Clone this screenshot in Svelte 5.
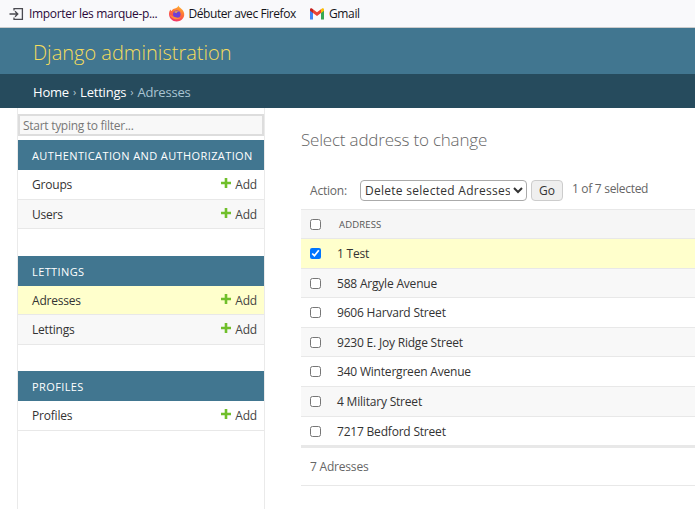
<script>
  const models = [
    { caption: 'Authentication and Authorization', rows: ['Groups', 'Users'] },
    { caption: 'Lettings', rows: ['Adresses', 'Lettings'], current: 'Adresses' },
    { caption: 'Profiles', rows: ['Profiles'] }
  ]
  const addresses = [
    '1 Test',
    '588 Argyle Avenue',
    '9606 Harvard Street',
    '9230 E. Joy Ridge Street',
    '340 Wintergreen Avenue',
    '4 Military Street',
    '7217 Bedford Street'
  ]
</script>

<div class="bookmarks">
  <div class="bm">
    <svg width="16" height="16" viewBox="0 0 16 16" fill="none" stroke="#4a4a50" stroke-width="1.3">
      <path d="M5 4.5V2.600h8.400v10.800H5v-1.900" />
      <path d="M0.500 8h8M6 5.200 8.800 8 6 10.800" />
    </svg>
    <span class="import">Importer les marque-p...</span>
  </div>
  <div class="bm fx">
    <svg width="17" height="17" viewBox="0 0 17 17">
      <defs>
        <linearGradient id="fxg" x1="0.700" y1="0" x2="0.300" y2="1">
          <stop offset="0" stop-color="#ffb52e" />
          <stop offset="0.500" stop-color="#ff6a3a" />
          <stop offset="1" stop-color="#f0306f" />
        </linearGradient>
      </defs>
      <path d="M10.500.500c.2 1.500 1.500 2 2.500 3 2.500 2 3.500 4.500 3.200 6.800-.5 3.700-3.700 6.200-7.500 6.200C4.500 16.500 1 13.200 1 9c0-1.800.6-3.500 1.400-4.600.2.800.6 1.300 1.200 1.600C4.300 4.700 5.500 4 7 3.600 8.500 3 10 2 10.500.500z" fill="url(#fxg)" />
      <circle cx="8.800" cy="9.300" r="3.700" fill="#6e3fd8" />
      <path d="M5.600 7.300C7 5.800 10 5.700 11.600 7.300c-1.600-.5-3-.2-3.400 1-.5-.7-1.500-1-2.600-1z" fill="#ffb52e" />
      <path d="M2 9.500c.6 2.800 3.500 5 6.700 4.800 2.200-.1 4-1.200 5-2.800-1.200 1-3 1.600-5 1.100C6.300 12 4 11 2 9.500z" fill="#ff8a3a" />
    </svg>
    <span class="fx-label">Débuter avec Firefox</span>
  </div>
  <div class="bm gm">
    <svg width="16" height="16" viewBox="0 0 16 16">
      <path d="M1 13.500V4l3 2.300v7.200z" fill="#4285f4" />
      <path d="M12 13.500V6.300L15 4v9.500z" fill="#34a853" />
      <path d="M12 3.200V7l3-2.300V3.500c0-1-1.200-1.600-2-1z" fill="#fbbc04" />
      <path d="M4 7V3.200L8 6.200l4-3V7L8 10z" fill="#ea4335" />
      <path d="M1 3.500v1.200L4 7V3.200l-1-.7c-.8-.6-2 0-2 1z" fill="#c5221f" />
    </svg>
    <span>Gmail</span>
  </div>
</div>

<header class="site-header">Django administration</header>

<nav class="crumbs">
  <span>Home</span><i>›</i><span>Lettings</span><i>›</i><span class="here">Adresses</span>
</nav>

<div class="page">
  <aside class="sidebar">
    <input class="filter" type="text" placeholder="Start typing to filter..." />
    {#each models as group}
      <section class="module">
        <h2>{group.caption}</h2>
        {#each group.rows as row, i}
          <div class="mrow" class:alt={i % 2 === 1} class:current={row === group.current}>
            <span>{row}</span>
            <span class="add">
              <svg width="10" height="10" viewBox="0 0 10 10"><path d="M3.700 0h2.600v3.700H10v2.600H6.300V10H3.700V6.300H0V3.700h3.700z" fill="#70bf2b" /></svg>
              Add
            </span>
          </div>
        {/each}
      </section>
    {/each}
  </aside>

  <main class="content">
    <h1>Select address to change</h1>
    <div class="actions">
      <span class="lbl">Action:</span>
      <select class="act-select">
        <option>Delete selected Adresses</option>
      </select>
      <button class="go" type="button">Go</button>
      <span class="count">1 of 7 selected</span>
    </div>
    <div class="thead">
      <span class="cb"><input type="checkbox" /></span>
      <span class="th">Address</span>
    </div>
    {#each addresses as address, i}
      <div class="trow" class:odd={i % 2 === 1} class:selected={i === 0}>
        <span class="cb"><input type="checkbox" checked={i === 0} /></span>
        <span class="addr">{address}</span>
      </div>
    {/each}
    <div class="paginator">7 Adresses</div>
  </main>
</div>

<style>
  :global(body) {
    margin: 0;
    background: #fff;
    overflow: hidden;
    font-family: 'Open Sans', 'Noto Sans', sans-serif;
    color: #333;
  }
  .bookmarks {
    height: 27px;
    background: #f9f9fb;
    border-bottom: 1px solid #ccc;
    display: flex;
    align-items: center;
    padding-left: 9px;
    font-size: 12px;
    letter-spacing: -0.33px;
    color: #15141a;
  }
  .bm {
    display: flex;
    align-items: center;
    gap: 4px;
  }
  .bm.fx {
    margin-left: 11px;
    gap: 3px;
  }
  .fx-label { letter-spacing: -0.42px; }
  .bm.gm { margin-left: 13px; }
  .import { color: #2a0a3a; }
  .site-header {
    height: 46px;
    background: #417690;
    color: #f5dd5d;
    font-size: 20px;
    font-weight: 300;
    line-height: 50px;
    padding-left: 33px;
    letter-spacing: 0;
  }
  .crumbs {
    box-sizing: border-box;
    height: 34px;
    background: #264b5d;
    color: #fff;
    font-size: 13px;
    letter-spacing: -0.2px;
    display: flex;
    align-items: center;
    padding: 1px 0 0 33px;
  }
  .crumbs i {
    font-style: normal;
    color: #b5c8d2;
    margin: 0 4px;
    font-size: 11px;
  }
  .here { color: #a9c4d2; }
  .page {
    display: flex;
    align-items: stretch;
    height: 401px;
  }
  .sidebar {
    box-sizing: border-box;
    width: 248px;
    margin-left: 17px;
    border-left: 1px solid #eaeaea;
    border-right: 1px solid #eaeaea;
    padding-top: 6px;
    display: flex;
    flex-direction: column;
  }
  .filter {
    box-sizing: border-box;
    width: 246px;
    height: 22px;
    margin: 0 0 4px;
    padding: 1px 3px 0;
    border: 2px solid #ddd;
    background: #f8f8f8;
    font: 12px 'Open Sans', sans-serif;
    letter-spacing: -0.28px;
    border-radius: 0;
    outline: none;
  }
  .filter::placeholder { color: #777; opacity: 1; }
  .module { margin-bottom: 26.500px; }
  .module h2 {
    margin: 0;
    height: 30px;
    background: #417690;
    color: #fff;
    font-size: 11px;
    font-weight: 400;
    text-transform: uppercase;
    letter-spacing: 0.39px;
    line-height: 31px;
    padding-left: 14px;
    white-space: nowrap;
  }
  .mrow {
    box-sizing: border-box;
    height: 29.500px;
    border-bottom: 1px solid #e8e8e8;
    display: flex;
    align-items: center;
    justify-content: space-between;
    padding: 1px 7px 0 14px;
    font-size: 12px;
    font-weight: 500;
    letter-spacing: -0.2px;
    color: #333;
  }
  .mrow.alt { background: #f8f8f8; }
  .mrow.current { background: #ffffcc; }
  .add {
    display: flex;
    align-items: center;
    gap: 4px;
    font-weight: 400;
    color: #444;
  }
  .add svg { margin-top: -3px; }
  .content {
    box-sizing: border-box;
    flex: 1;
    margin-left: 36px;
    min-width: 0;
  }
  h1 {
    margin: 0;
    height: 64px;
    padding-top: 20px;
    box-sizing: border-box;
    font-size: 17px;
    font-weight: 300;
    letter-spacing: -0.2px;
    line-height: 24px;
    color: #666;
  }
  .actions {
    height: 37px;
    display: flex;
    align-items: center;
    font-size: 12px;
    color: #666;
    padding-left: 9px;
    letter-spacing: -0.2px;
  }
  .act-select {
    box-sizing: border-box;
    width: 167px;
    height: 21px;
    margin-left: 13px;
    padding: 0;
    font: 12px 'Open Sans', sans-serif;
    letter-spacing: 0.28px;
    color: #333;
    background: #fff;
    border: 1px solid #aaa;
    border-radius: 4px;
  }
  .go {
    box-sizing: border-box;
    width: 32px;
    height: 21px;
    margin-left: 4px;
    padding: 0;
    font: 12px 'Open Sans', sans-serif;
    color: #333;
    background: #efefef;
    border: 1px solid #ccc;
    border-radius: 4px;
  }
  .count {
    margin-left: 9px;
    margin-top: -4px;
    letter-spacing: -0.3px;
  }
  .thead {
    box-sizing: border-box;
    height: 30px;
    display: flex;
    align-items: center;
    background: #f6f6f6;
    border-top: 1px solid #e8e8e8;
    border-bottom: 1px solid #e8e8e8;
  }
  .th {
    font-size: 9.500px;
    font-weight: 400;
    letter-spacing: 0.15px;
    text-transform: uppercase;
    color: #555;
    margin-left: 2px;
    padding-top: 1px;
  }
  .cb {
    width: 36px;
    display: flex;
    padding-left: 9px;
    box-sizing: border-box;
  }
  .cb input {
    width: 11px;
    height: 11px;
    margin: 0;
  }
  .trow {
    box-sizing: border-box;
    height: 29.600px;
    display: flex;
    align-items: center;
    border-bottom: 1px solid #e8e8e8;
    padding-top: 0.500px;
    font-size: 12px;
    font-weight: 500;
    letter-spacing: -0.2px;
    color: #333;
  }
  .trow.odd { background: #f8f8f8; }
  .trow.selected { background: #ffffcc; }
  .paginator {
    box-sizing: border-box;
    height: 40px;
    border-top: 2px solid #e8e8e8;
    border-bottom: 1px solid #e8e8e8;
    font-size: 12px;
    letter-spacing: -0.2px;
    color: #666;
    display: flex;
    align-items: center;
    padding-left: 9px;
  }
</style>
